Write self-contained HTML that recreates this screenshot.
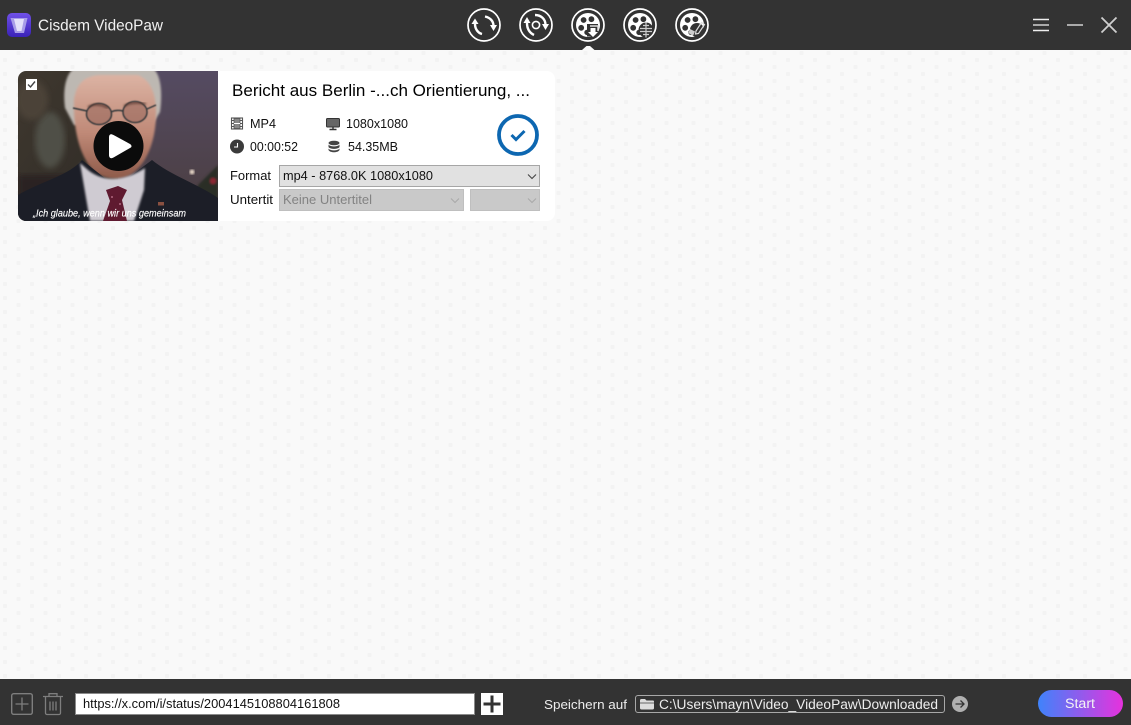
<!DOCTYPE html>
<html><head><meta charset="utf-8"><title>Cisdem VideoPaw</title>
<style>
html,body{margin:0;padding:0;width:1131px;height:725px;overflow:hidden;background:#fafafa}
svg{display:block}
text{font-family:"Liberation Sans",sans-serif;white-space:pre}
</style></head><body>
<svg xmlns="http://www.w3.org/2000/svg" width="1131" height="725" viewBox="0 0 1131 725">
<defs>
<pattern id="dots" x="3" y="2" width="27" height="14" patternUnits="userSpaceOnUse">
<rect width="27" height="14" fill="#f9f9f9"/>
<rect x="0" y="0" width="4" height="4" rx="1" fill="#f3f3f3"/>
<rect x="13.5" y="7" width="4" height="4" rx="1" fill="#f3f3f3"/>
</pattern>
<linearGradient id="logo" x1="0" y1="0" x2="0" y2="1"><stop offset="0" stop-color="#7050e8"/><stop offset="1" stop-color="#3a22b8"/></linearGradient>
<linearGradient id="start" x1="0" y1="0" x2="1" y2="0"><stop offset="0" stop-color="#3f83fb"/><stop offset="1" stop-color="#e632dd"/></linearGradient>
<linearGradient id="bgl" x1="0" y1="0" x2="1" y2="1"><stop offset="0" stop-color="#3f382f"/><stop offset="1" stop-color="#2e2a25"/></linearGradient>
<linearGradient id="bgr" x1="0" y1="0" x2="0" y2="1"><stop offset="0" stop-color="#554b62"/><stop offset="1" stop-color="#4a3d3e"/></linearGradient>
<linearGradient id="skin" x1="0" y1="0" x2="0" y2="1"><stop offset="0" stop-color="#dcb3a3"/><stop offset=".55" stop-color="#c08a78"/><stop offset="1" stop-color="#8e5a4a"/></linearGradient>
<filter id="b1"><feGaussianBlur stdDeviation="1"/></filter>
<filter id="b05"><feGaussianBlur stdDeviation=".5"/></filter>
<filter id="b3"><feGaussianBlur stdDeviation="3"/></filter>
<clipPath id="thumb"><path d="M26 71H218V221H26a8 8 0 0 1-8-8V79a8 8 0 0 1 8-8z"/></clipPath>
<g id="reel"><circle r="16" fill="none" stroke="#fff" stroke-width="1.7"/><circle r="12" fill="#fff"/><circle cx="-4.4" cy="-5" r="2.9" fill="#333"/><circle cx="3.400" cy="-5.800" r="2.900" fill="#333"/><circle cx="-6.800" cy="2.800" r="2.900" fill="#333"/><circle cx="-1" cy="7.400" r="2.700" fill="#333"/></g>
</defs>

<rect width="1131" height="725" fill="url(#dots)"/>

<!-- header -->
<rect width="1131" height="50" fill="#333"/>
<rect x="7" y="13" width="24" height="24" rx="5" fill="url(#logo)"/>
<path d="M10.500 18H27.500L24 33H15Z" fill="#a89ce8"/><path d="M14 19H24L21.500 31H17Z" fill="#e4e0fa"/>
<text x="38" y="30.500" font-size="16" fill="#f1f1f1" textLength="125" lengthAdjust="spacingAndGlyphs">Cisdem VideoPaw</text>

<g transform="translate(484 25)" fill="none" stroke="#fff">
<circle r="16" stroke-width="1.700"/>
<path d="M-9 -1C-9 4-6 8-2 9" stroke-width="2.400"/><path d="M-12.500 -1L-5.500 -1L-9 -6.500Z" fill="#fff" stroke="none"/>
<path d="M1 -8.500C6 -7.500 9.500 -4 9.500 1" stroke-width="2.400"/><path d="M6 0L13 0L9.500 6Z" fill="#fff" stroke="none"/>
</g>
<g transform="translate(536 25)" fill="none" stroke="#fff">
<circle r="16" stroke-width="1.700"/><circle r="3.600" stroke-width="1.600"/>
<path d="M-9 -2C-9 4-6 8-2 10" stroke-width="2.400"/><path d="M-12.500 -2L-5.500 -2L-9 -8Z" fill="#fff" stroke="none"/>
<path d="M-1 -10C5 -10 9.500 -6 9.500 0" stroke-width="2.400"/><path d="M6 -1L13 -1L9.500 5Z" fill="#fff" stroke="none"/>
</g>
<use href="#reel" x="588" y="25"/>
<rect x="587" y="24" width="11" height="12.500" fill="#333"/>
<path d="M590 26H598V31" fill="none" stroke="#ddd" stroke-width="1.500"/>
<path d="M590.500 28H595.500V32H598L593 37L588 32H590.500Z" fill="#fff"/>
<path d="M582 50L586.500 46H590L594.500 50Z" fill="#fafafa"/>
<use href="#reel" x="640" y="25"/>
<circle cx="646" cy="30" r="7.500" fill="#333"/><path d="M646 22.500V37.500M640 28.500H652M640 31.500H652M643 25.500L649 25.500M643 34.500L649 34.500" stroke="#ccc" stroke-width="1.200"/>
<use href="#reel" x="692" y="25"/>
<circle cx="697" cy="30" r="7" fill="#333"/><path d="M696 31L701.500 22.500L704.500 24.500L698.500 33.500L695.500 34Z" fill="none" stroke="#ddd" stroke-width="1.200"/><path d="M690 29L695 31.500L693 36L688.500 33Z" fill="#ccc"/>

<g fill="none">
<path d="M1033 19.500H1049M1033 30.500H1049" stroke="#eee" stroke-width="1.400"/>
<path d="M1033 25H1049" stroke="#aaa" stroke-width="2"/>
<path d="M1067 25H1083" stroke="#aaa" stroke-width="2"/>
<path d="M1101.500 17.500L1116.500 32.500M1116.500 17.500L1101.500 32.500" stroke="#cfcfcf" stroke-width="1.800"/>
</g>

<!-- card -->
<rect x="18" y="71" width="537" height="150" rx="8" fill="#fff"/>
<g clip-path="url(#thumb)">
<rect x="18" y="71" width="100" height="150" fill="url(#bgl)"/>
<rect x="118" y="71" width="100" height="150" fill="url(#bgr)"/>
<ellipse cx="50" cy="140" rx="15" ry="28" fill="#4f4f46" filter="url(#b3)"/>
<ellipse cx="32" cy="100" rx="16" ry="20" fill="#4c4238" filter="url(#b3)"/>
<rect x="18" y="175" width="60" height="30" fill="#2a2420" filter="url(#b3)"/>
<path d="M198 185L218 165V205H190Z" fill="#2a2d28" filter="url(#b1)"/>
<circle cx="192" cy="172" r="2.500" fill="#e8d8c8" filter="url(#b1)"/><circle cx="213" cy="181" r="3.500" fill="#8a2830" filter="url(#b1)"/>
<path d="M65 108C62 85 68 71 75 68H152C160 72 163 90 160 112L152 125H74Z" fill="#bdb8b2" filter="url(#b1)"/>
<path d="M74 100C76 84 84 76 100 75H138C150 80 155 92 156 108C157 135 149 165 128 176C118 181 105 179 95 172C82 160 73 135 74 100Z" fill="url(#skin)" filter="url(#b1)"/>
<path d="M18 195C40 182 70 175 82 160L116 187L152 160C170 175 200 185 218 198V221H18Z" fill="#1c1e27"/>
<path d="M80 163L88 170C100 180 120 184 145 168L144 190L134 221H90Z" fill="#cfcbd2" filter="url(#b1)"/>
<path d="M106 190L118 186L127 190L122 200L127 221H103L110 201Z" fill="#5f1a30"/>
<circle cx="112" cy="197" r="1" fill="#b06880"/><circle cx="120" cy="204" r="1" fill="#b06880"/><circle cx="112" cy="212" r="1" fill="#b06880"/>
<rect x="158" y="202" width="6" height="3.500" fill="#8a5040"/>
<g filter="url(#b05)" fill="#96645a" fill-opacity=".55" stroke="#33383b" stroke-width="1.500"><ellipse cx="99" cy="114" rx="12.500" ry="10.500"/><ellipse cx="135" cy="112" rx="12" ry="10.500"/><path d="M111 112C115 110 119 110 123 111M87 111L73 108M147 109L156 105" fill="none"/></g>
<path d="M88 107Q97 102 108 108M124 106Q133 101 146 104" fill="none" stroke="#5a3a32" stroke-width="1.600" filter="url(#b1)"/>
<circle cx="118.500" cy="146" r="25" fill="#0b0b0b"/>
<path d="M109 137.500C109 134 111 133.500 113.500 135L130 144C132 145.500 132 147 130 148L113.500 157.500C111 159 109 158 109 155Z" fill="#fff"/>
<text x="33" y="216.500" font-size="10.500" font-style="italic" fill="#fff" stroke="#fff" stroke-width=".15" textLength="153" lengthAdjust="spacingAndGlyphs">„Ich glaube, wenn wir uns gemeinsam</text>
</g>
<rect x="26" y="79" width="11" height="11" fill="#fff"/><path d="M28 84.500L30.500 87L35 81.500" fill="none" stroke="#444" stroke-width="1.400"/>

<text x="232" y="96" font-size="17" fill="#000" textLength="298" lengthAdjust="spacingAndGlyphs">Bericht aus Berlin -...ch Orientierung, ...</text>

<!-- film icon -->
<rect x="231.500" y="118" width="11" height="11" fill="none" stroke="#555" stroke-width="1.100"/><rect x="234" y="118.500" width="6" height="10" fill="#888" stroke="#555" stroke-width=".8"/><path d="M234 123.500H240" stroke="#fff"/><path d="M232 120.500H234M232 123.500H234M232 126.500H234M240 120.500H242M240 123.500H242M240 126.500H242" stroke="#555"/>
<text x="250" y="128" font-size="13" fill="#111" textLength="26" lengthAdjust="spacingAndGlyphs">MP4</text>
<!-- monitor -->
<rect x="326.500" y="118.500" width="13" height="8.500" rx="1" fill="#666" stroke="#333"/><path d="M333 127V129M329.500 129.500H336.500" stroke="#333" stroke-width="1.400"/>
<text x="346" y="128" font-size="13" fill="#111" textLength="62" lengthAdjust="spacingAndGlyphs">1080x1080</text>
<!-- clock -->
<circle cx="237" cy="146.500" r="7" fill="#3b3b3b"/><path d="M237.500 143V147H234" fill="none" stroke="#fff" stroke-width="1.100"/>
<text x="250" y="151" font-size="13" fill="#111" textLength="48" lengthAdjust="spacingAndGlyphs">00:00:52</text>
<!-- db -->
<g fill="#444"><ellipse cx="334" cy="143" rx="5.500" ry="2.300"/><path d="M328.500 144.500C330 147 338 147 339.500 144.500V147C338 149.500 330 149.500 328.500 147Z"/><path d="M328.500 148.500C330 151 338 151 339.500 148.500V150C338 153 330 153 328.500 150Z"/></g>
<text x="348" y="151" font-size="13" fill="#111" textLength="50" lengthAdjust="spacingAndGlyphs">54.35MB</text>
<!-- done -->
<circle cx="518" cy="135" r="19" fill="none" stroke="#0d67b1" stroke-width="3.800"/>
<path d="M511.500 135L516 139.500L524.500 131" fill="none" stroke="#0d67b1" stroke-width="3"/>

<text x="230" y="180" font-size="13" fill="#111" textLength="41" lengthAdjust="spacingAndGlyphs">Format</text>
<rect x="279.500" y="165.500" width="260" height="21" fill="#e1e1e1" stroke="#a6a6a6"/>
<text x="283" y="180" font-size="13" fill="#111" textLength="150" lengthAdjust="spacingAndGlyphs">mp4 - 8768.0K 1080x1080</text>
<path d="M528 174.500L532 178.500L536 174.500" fill="none" stroke="#444" stroke-width="1.100"/>
<text x="230" y="204" font-size="13" fill="#111" textLength="43" lengthAdjust="spacingAndGlyphs">Untertit</text>
<rect x="279.500" y="189.500" width="184" height="21" fill="#c9c9c9" stroke="#bfbfbf"/>
<text x="283" y="204" font-size="13" fill="#838383" textLength="89" lengthAdjust="spacingAndGlyphs">Keine Untertitel</text>
<path d="M451 198.500L455 202.500L459 198.500" fill="none" stroke="#aaa" stroke-width="1.100"/>
<rect x="470.500" y="189.500" width="69" height="21" fill="#c9c9c9" stroke="#bfbfbf"/>
<path d="M528 198.500L532 202.500L536 198.500" fill="none" stroke="#aaa" stroke-width="1.100"/>

<!-- footer -->
<rect y="679" width="1131" height="46" fill="#333"/>
<rect x="11.700" y="693.700" width="20.600" height="20.600" rx="2" fill="none" stroke="#7e7e7e" stroke-width="1.400"/>
<path d="M22 697.500V710.500M15.500 704H28.500" stroke="#7e7e7e" stroke-width="1.300"/>
<g fill="none" stroke="#7e7e7e" stroke-width="1.300"><path d="M43 696.500H63M49 696V693.700H57V696M45.500 697V713A1.500 1.500 0 0 0 47 714.500H59A1.500 1.500 0 0 0 60.500 713V697"/><path d="M50 701.500V710.500M53 701.500V710.500M56 701.500V710.500"/></g>
<rect x="75.500" y="693.500" width="399" height="21" fill="#fff" stroke="#8a8a8a"/>
<text x="83" y="708" font-size="12.500" fill="#111" textLength="257" lengthAdjust="spacingAndGlyphs">https://x.com/i/status/2004145108804161808</text>
<rect x="481" y="693" width="22" height="22" fill="#fff"/>
<path d="M492 695.500V712.500M483.500 704H500.500" stroke="#333" stroke-width="3"/>
<text x="544" y="709" font-size="13" fill="#eee" textLength="83" lengthAdjust="spacingAndGlyphs">Speichern auf</text>
<rect x="635.500" y="695.500" width="309" height="17" rx="2.500" fill="none" stroke="#a8a8a8"/>
<path d="M640 700.500A1.500 1.500 0 0 1 641.500 699H645L646.500 700.500H653A1 1 0 0 1 654 701.500V708A1.500 1.500 0 0 1 652.500 709.500H641.500A1.500 1.500 0 0 1 640 708Z" fill="#ddd"/>
<path d="M640 703H654" stroke="#333" stroke-width=".7"/>
<text x="659" y="709" font-size="13.500" fill="#eee" textLength="279" lengthAdjust="spacingAndGlyphs">C:\Users\mayn\Video_VideoPaw\Downloaded</text>
<circle cx="960" cy="704" r="8" fill="#b0b0b0"/>
<path d="M955.500 704H964M960.500 700.500L964 704L960.500 707.500" fill="none" stroke="#333" stroke-width="1.300"/>
<rect x="1038" y="690" width="85" height="27" rx="13.500" fill="url(#start)"/>
<text x="1065" y="708" font-size="13.500" fill="#f4f4f4" textLength="30" lengthAdjust="spacingAndGlyphs">Start</text>
</svg>
</body></html>
